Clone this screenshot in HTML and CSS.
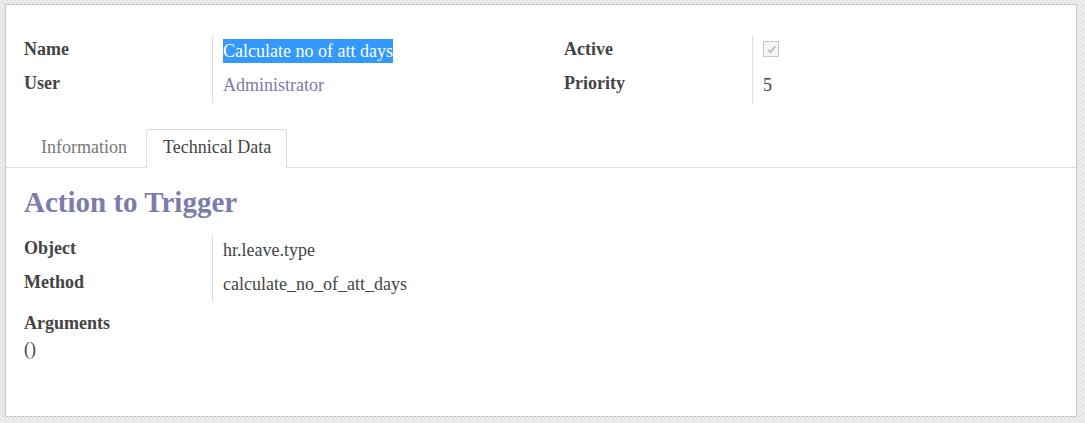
FILE: index.html
```html
<!DOCTYPE html>
<html>
<head>
<meta charset="utf-8">
<link rel="stylesheet" href="styles.css">
</head>
<body>
<div class="sheet">
  <div class="groups">
    <div class="group">
      <div class="label">Name</div>
      <div class="value"><span class="sel">Calculate no of att days</span></div>
      <div class="label">User</div>
      <div class="value link">Administrator</div>
    </div>
    <div class="group">
      <div class="label">Active</div>
      <div class="value"><span class="checkbox"><svg width="13" height="13" viewBox="0 0 13 13"><path d="M3 6.8 L5.6 9.4 L10.2 3.2" fill="none" stroke="#b5b5b5" stroke-width="1.6"/></svg></span></div>
      <div class="label">Priority</div>
      <div class="value">5</div>
    </div>
  </div>
  <div class="tabs">
    <div class="tab">Information</div>
    <div class="tab active">Technical Data</div>
  </div>
  <div class="pane">
    <h2 class="title">Action to Trigger</h2>
    <div class="group single">
      <div class="label">Object</div>
      <div class="value">hr.leave.type</div>
      <div class="label">Method</div>
      <div class="value">calculate_no_of_att_days</div>
    </div>
    <div class="args">
      <div class="arglabel">Arguments</div>
      <div class="argval">()</div>
    </div>
  </div>
</div>
</body>
</html>
```
FILE: styles.css
```css
html, body {
  margin: 0;
  padding: 0;
}
body {
  width: 1085px;
  height: 423px;
  overflow: hidden;
  background-color: #ececec;
  background-image: repeating-conic-gradient(#e3e3e3 0 25%, #f0f0f0 0 50%);
  background-size: 4px 4px;
  font-family: "Liberation Serif", "Times New Roman", serif;
  color: #444;
  font-size: 18px;
}
.sheet {
  margin: 4px 0 0 5px;
  width: 1070px;
  height: 411px;
  background: #fff;
  border: 1px solid #c9c9c9;
  box-shadow: 0 0 2px rgba(0,0,0,0.06);
}
.groups {
  display: grid;
  grid-template-columns: 517px 1fr;
  column-gap: 23px;
  padding: 31px 18px 0 18px;
  height: 124px;
  box-sizing: border-box;
}
.group {
  display: grid;
  grid-template-columns: 189px 1fr;
  grid-auto-rows: 33.5px;
  align-content: start;
}
.label {
  font-weight: bold;
  line-height: 20px;
  padding-top: 3px;
  border-right: 1px solid #dcdcdc;
  box-sizing: border-box;
}
.value {
  padding: 5px 0 0 10px;
  line-height: 20px;
  box-sizing: border-box;
}
.sel {
  background: #3399ff;
  color: #fff;
  padding: 2px 0;
}
.link {
  color: #7c7bad;
}
.checkbox {
  display: inline-flex;
  align-items: center;
  justify-content: center;
  width: 14px;
  height: 14px;
  border: 1px solid #c6c6c6;
  background: #f5f5f5;
  vertical-align: top;
}
.tabs {
  display: flex;
  gap: 2px;
  padding-left: 18px;
  border-bottom: 1px solid #dddddd;
  height: 39px;
  box-sizing: border-box;
  align-items: flex-start;
}
.tab {
  padding: 7px 16px 10px 16px;
  line-height: 20px;
  color: #777;
  border: 1px solid transparent;
  border-bottom: none;
  border-radius: 3px 3px 0 0;
  height: 38px;
  box-sizing: border-box;
}
.tab.active {
  color: #444;
  background: #fff;
  border-color: #dddddd;
  height: 39px;
  padding-right: 15px;
}
.pane {
  padding: 18px 18px 0 18px;
}
.title {
  margin: 0;
  font-size: 29px;
  line-height: 32px;
  color: #7c7bad;
  font-weight: bold;
}
.group.single {
  width: 517px;
  margin-top: 17px;
}
.args {
  padding-top: 11px;
}
.arglabel {
  font-weight: bold;
  line-height: 20px;
}
.argval {
  line-height: 20px;
  padding-top: 6px;
}
```
